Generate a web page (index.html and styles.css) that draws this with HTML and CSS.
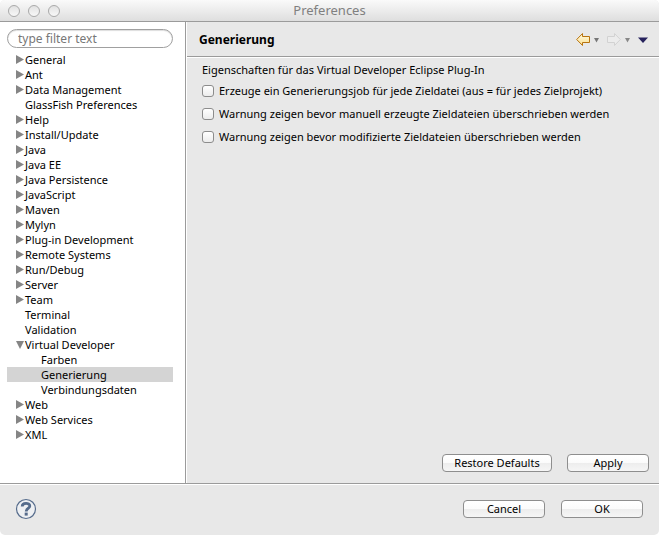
FILE: index.html
```html
<!DOCTYPE html>
<html lang="de">

<head>
    <meta charset="UTF-8">
    <meta name="viewport" content="width=device-width, initial-scale=1.0">
    <title>Preferences</title>
    <link rel="stylesheet" href="styles.css">
</head>

<body>
    <div class="window">
        <header class="titlebar">
            <div class="lights">
                <span class="light"></span>
                <span class="light"></span>
                <span class="light"></span>
            </div>
            <h1 class="window-title">Preferences</h1>
        </header>

        <div class="content">
            <nav class="sidebar">
                <input type="text" class="filter" placeholder="type filter text" aria-label="type filter text">
                <ul class="tree">
                    <li class="item closed">General</li>
                    <li class="item closed">Ant</li>
                    <li class="item closed">Data Management</li>
                    <li class="item">GlassFish Preferences</li>
                    <li class="item closed">Help</li>
                    <li class="item closed">Install/Update</li>
                    <li class="item closed">Java</li>
                    <li class="item closed">Java EE</li>
                    <li class="item closed">Java Persistence</li>
                    <li class="item closed">JavaScript</li>
                    <li class="item closed">Maven</li>
                    <li class="item closed">Mylyn</li>
                    <li class="item closed">Plug-in Development</li>
                    <li class="item closed">Remote Systems</li>
                    <li class="item closed">Run/Debug</li>
                    <li class="item closed">Server</li>
                    <li class="item closed">Team</li>
                    <li class="item">Terminal</li>
                    <li class="item">Validation</li>
                    <li class="item open">Virtual Developer</li>
                    <li class="item child">Farben</li>
                    <li class="item child selected">Generierung</li>
                    <li class="item child">Verbindungsdaten</li>
                    <li class="item closed">Web</li>
                    <li class="item closed">Web Services</li>
                    <li class="item closed">XML</li>
                </ul>
            </nav>

            <main class="page">
                <div class="page-header">
                    <h2 class="page-title">Generierung</h2>
                    <div class="toolbar">
                        <button class="tool" aria-label="Back">
                            <svg width="24" height="14" viewBox="0 0 24 14">
                                <defs>
                                    <linearGradient id="gold" x1="0" y1="0" x2="0" y2="1">
                                        <stop offset="0" stop-color="#fffbe6" />
                                        <stop offset="1" stop-color="#fbdf8c" />
                                    </linearGradient>
                                </defs>
                                <path d="M.7 7.500 6.500 1.500V4.500H13.500V10.500H6.500V13.500Z" fill="url(#gold)" stroke="#b8740f" />
                                <path d="M18 6h5l-2.500 4.500z" fill="#777" />
                            </svg>
                        </button>
                        <button class="tool" aria-label="Forward" disabled>
                            <svg width="24" height="14" viewBox="0 0 24 14">
                                <path d="M13.300 7.500 7.500 1.500V4.500H.5V10.500H7.500V13.500Z" fill="#ececec" stroke="#d2d2d2" />
                                <path d="M18 6h5l-2.500 4.500z" fill="#888" />
                            </svg>
                        </button>
                        <button class="tool" aria-label="Menu">
                            <svg width="10" height="14" viewBox="0 0 10 14">
                                <path d="M0 5.500h10L5 11z" fill="#26225c" />
                            </svg>
                        </button>
                    </div>
                </div>

                <form class="options">
                    <p class="intro">Eigenschaften für das Virtual Developer Eclipse Plug-In</p>
                    <label class="option"><input type="checkbox" class="check">Erzeuge ein Generierungsjob für jede Zieldatei (aus = für jedes Zielprojekt)</label>
                    <label class="option"><input type="checkbox" class="check">Warnung zeigen bevor manuell erzeugte Zieldateien überschrieben werden</label>
                    <label class="option"><input type="checkbox" class="check">Warnung zeigen bevor modifizierte Zieldateien überschrieben werden</label>
                </form>

                <div class="page-buttons">
                    <button class="btn btn-wide">Restore Defaults</button>
                    <button class="btn">Apply</button>
                </div>
            </main>
        </div>

        <footer class="footer">
            <button class="help" aria-label="Help">
                <svg width="22" height="22" viewBox="0 0 22 22">
                    <circle cx="11" cy="11" r="9.500" fill="#eef0f3" stroke="#566c8c" stroke-width="1.200" />
                    <path d="M7.200 8.500C7.200 4.500 14.800 4.500 14.800 8C14.800 10.500 11.200 10.500 11.200 13.500" fill="none" stroke="#566c8c" stroke-width="2.800" />
                    <rect x="9.700" y="14.600" width="3" height="3" fill="#566c8c" />
                </svg>
            </button>
            <div class="footer-buttons">
                <button class="btn">Cancel</button>
                <button class="btn">OK</button>
            </div>
        </footer>
    </div>
</body>

</html>
```

FILE: styles.css
```css
* {
    box-sizing: border-box;
}

body {
    margin: 0;
    background: #fff;
    color: #000;
    font-family: "Noto Sans", "Open Sans", sans-serif;
    font-size: 11px;
    line-height: 15px;
}

button,
input {
    font: inherit;
    color: inherit;
}

.window {
    display: flex;
    flex-direction: column;
    min-height: 100vh;
    background: #e8e8e8;
    border-radius: 5px;
    overflow: hidden;
}

.titlebar {
    display: grid;
    grid-template-columns: 1fr auto 1fr;
    align-items: center;
    height: 22px;
    padding: 0 8px;
    background: linear-gradient(#fafafa, #dedede);
    border-bottom: 1px solid #9b9b9b;
}

.lights {
    display: flex;
    gap: 8px;
}

.light {
    width: 12px;
    height: 12px;
    border: 1px solid #a9a9a9;
    border-radius: 50%;
    background: linear-gradient(#e2e2e2, #f8f8f8);
}

.window-title {
    margin: 0;
    font-size: 13px;
    font-weight: normal;
    color: #808080;
}

.content {
    display: flex;
    flex: 1;
}

.sidebar {
    width: 186px;
    padding: 7px 12px 0 7px;
    background: #fff;
    border-right: 1px solid #9b9b9b;
}

.filter {
    display: block;
    width: 100%;
    height: 19px;
    padding: 0 10px;
    border: 1px solid #a0a0a0;
    border-radius: 10px;
    background: #fff;
    box-shadow: inset 0 1px 1px #ddd;
    font-size: 12px;
}

.filter::placeholder {
    color: #777;
}

.tree {
    margin: 4px 0 0;
    padding: 0;
    list-style: none;
}

.item {
    display: flex;
    align-items: center;
    height: 15px;
    padding-left: 18px;
}

.closed,
.open {
    gap: 1px;
    padding-left: 9px;
}

.closed::before,
.open::before {
    content: "";
    width: 8px;
    height: 9px;
    background: #858585;
    clip-path: polygon(0 0, 100% 50%, 0 100%);
}

.open::before {
    clip-path: polygon(0 10%, 100% 10%, 50% 100%);
}

.child {
    padding-left: 34px;
}

.selected {
    background: #d4d4d4;
}

.page {
    display: flex;
    flex: 1;
    flex-direction: column;
    border-left: 1px solid #fff;
}

.page-header {
    display: flex;
    align-items: center;
    justify-content: space-between;
    height: 35px;
    padding: 0 11px 0 12px;
    border-bottom: 1px solid #9b9b9b;
    box-shadow: 0 1px #fff;
}

.page-title {
    margin: 0;
    font-size: 12px;
    font-weight: bold;
}

.toolbar {
    display: flex;
    gap: 7px;
}

.tool,
.help {
    display: flex;
    padding: 0;
    border: 0;
    background: none;
}

.options {
    flex: 1;
    padding: 5px 15px;
}

.intro {
    margin: 0 0 2px;
}

.option {
    display: flex;
    align-items: center;
    gap: 5px;
    height: 23px;
}

.check {
    appearance: none;
    width: 12px;
    height: 12px;
    margin: 0;
    border: 1px solid #8c8c8c;
    border-radius: 3px;
    background: linear-gradient(#fff, #ececec);
}

.page-buttons,
.footer-buttons {
    display: flex;
    gap: 15px;
}

.page-buttons {
    justify-content: flex-end;
    padding: 0 10px 11px;
}

.footer-buttons {
    gap: 16px;
}

.btn {
    width: 82px;
    height: 18px;
    padding: 0;
    border: 1px solid #8e8e8e;
    border-radius: 4px;
    background: linear-gradient(#fff 0%, #fbfbfb 49%, #ededed 51%, #f6f6f6 100%);
    line-height: 14px;
}

.btn-wide {
    width: 110px;
}

.footer {
    display: flex;
    align-items: center;
    justify-content: space-between;
    height: 52px;
    padding: 0 16px 2px 15px;
    border-top: 1px solid #9b9b9b;
    box-shadow: inset 0 1px #fff;
}
```
